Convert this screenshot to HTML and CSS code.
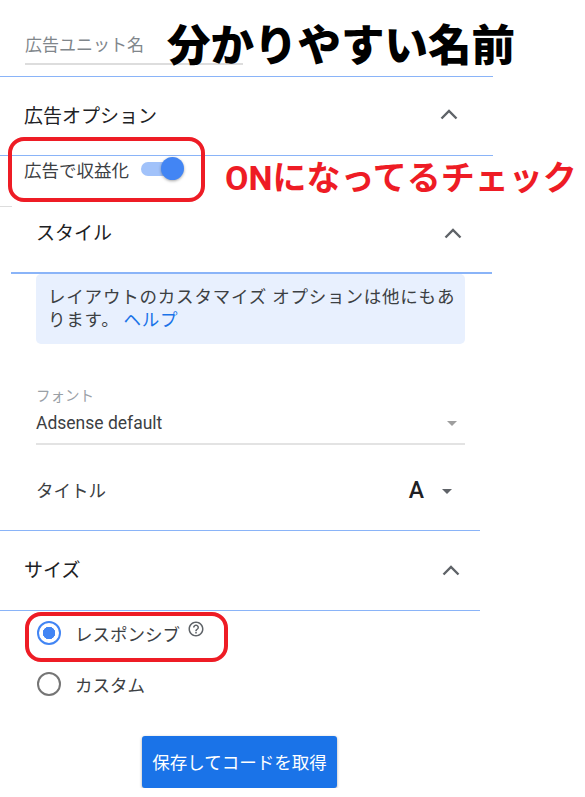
FILE: index.html
```html
<!doctype html>
<html lang="ja">
<head>
<meta charset="utf-8">
<title>広告ユニット</title>
<link rel="stylesheet" href="styles.css">
</head>
<body>

	<div class="page">

		<div class="name-row">
			<div class="name-field"><span class="name-label">広告ユニット名</span></div>
		</div>

		<div class="acc-head acc-main">
			<span>広告オプション</span>
			<svg class="chevron" width="18" height="11" viewBox="0 0 18 11"><polyline points="1.5,9.5 9,2 16.5,9.5" /></svg>
		</div>

		<div class="toggle-row">
			<span>広告で収益化</span>
			<span class="switch"><span class="switch-track"></span><span class="switch-thumb"></span></span>
		</div>

		<div class="stub"></div>

		<div class="style-panel">

			<div class="acc-head acc-style">
				<span>スタイル</span>
				<svg class="chevron" width="18" height="11" viewBox="0 0 18 11"><polyline points="1.5,9.5 9,2 16.5,9.5" /></svg>
			</div>

			<div class="info">
				<div>レイアウトのカスタマイズ オプションは他にもあ</div>
				<div>ります。<a href="#">ヘルプ</a></div>
			</div>

			<div class="select-field">
				<div class="select-label">フォント</div>
				<div class="select-value"><span>Adsense default</span><span class="caret"></span></div>
			</div>

			<div class="title-row">
				<span>タイトル</span>
				<span class="title-ctl"><span class="title-a">A</span><span class="caret caret-dark"></span></span>
			</div>

		</div>

		<div class="size-section">

			<div class="acc-head acc-size">
				<span>サイズ</span>
				<svg class="chevron" width="18" height="11" viewBox="0 0 18 11"><polyline points="1.5,9.5 9,2 16.5,9.5" /></svg>
			</div>

			<div class="radio-list">
				<label class="radio-row">
					<span class="radio radio-on"></span>
					<span>レスポンシブ</span>
					<svg class="help" width="18" height="18" viewBox="0 0 24 24"><path d="M11 18h2v-2h-2v2zm1-16C6.48 2 2 6.48 2 12s4.48 10 10 10 10-4.48 10-10S17.52 2 12 2zm0 18c-4.41 0-8-3.59-8-8s3.59-8 8-8 8 3.59 8 8-3.59 8-8 8zm0-14c-2.21 0-4 1.79-4 4h2c0-1.1.9-2 2-2s2 .9 2 2c0 2-3 1.75-3 5h2c0-2.25 3-2.5 3-5 0-2.21-1.79-4-4-4z" /></svg>
				</label>
				<label class="radio-row">
					<span class="radio"></span>
					<span>カスタム</span>
				</label>
			</div>

			<button class="btn-save">保存してコードを取得</button>

		</div>

		<!-- annotations drawn over the screenshot -->
		<div class="note-big">分かりやすい名前</div>
		<div class="note-box note-box-toggle"></div>
		<div class="note-red">ONになってるチェック</div>
		<div class="note-box note-box-radio"></div>

	</div>

</body>
</html>
```

FILE: styles.css
```css
	html { --line-blue: #8ab4f8; --text: #3c4043; --grey: #5f6368; --red: #ee1c25; }

	body { margin: 0; background: #fff; color: var( --text ); font: 17.5px Roboto, "Noto Sans CJK JP", sans-serif; }

	.page { position: relative; width: 493px; }

	/* ad unit name */
	.name-row { height: 76px; border-bottom: 1px solid var( --line-blue ); }
	.name-field { box-sizing: border-box; display: flex; align-items: flex-end; height: 65px; width: 218px; margin-left: 25px;
		padding-bottom: 8px; border-bottom: 2px solid #ddd; }
	.name-label { color: #80868b; font-size: 17px; line-height: 20px; }

	/* accordion headers */
	.acc-head { box-sizing: border-box; display: flex; align-items: center; justify-content: space-between; color: #202124; font-size: 19px; }
	.acc-main { height: 79px; padding: 0 35px 4px 24px; border-bottom: 1px solid var( --line-blue ); }
	.acc-style { height: 67px; padding: 0 30px 17px 25px; border-bottom: 2px solid var( --line-blue ); }
	.acc-size { height: 80px; padding: 0 20px 4px 24px; border-bottom: 1px solid var( --line-blue ); }
	.chevron polyline { fill: none; stroke: var( --grey ); stroke-width: 2.4; }
	.acc-style .chevron, .acc-size .chevron { margin-top: 4px; }

	/* toggle */
	.toggle-row { box-sizing: border-box; display: flex; align-items: center; gap: 12px; height: 50px; padding: 0 0 24px 24px; font-size: 17.5px; }
	.switch { position: relative; display: block; width: 43px; height: 22px; }
	.switch-track { position: absolute; left: 0; top: 4px; width: 36px; height: 14px; border-radius: 7px; background: #a1c2fa; }
	.switch-thumb { position: absolute; left: 20px; top: -1px; width: 23px; height: 23px; border-radius: 50%; background: #4285f4;
		box-shadow: 0 1px 3px rgba( 0, 0, 0, .35 ); }

	.stub { width: 12px; height: 1px; background: #ddd; }

	/* style panel */
	.style-panel { width: 481px; margin-left: 11px; }

	.info { box-sizing: border-box; width: 429px; height: 70px; margin-left: 25px; padding: 12px 8px 0 12px; background: #e8f0fe;
		border-radius: 5px; line-height: 23px; letter-spacing: .8px; white-space: nowrap; }
	.info a { color: #1a73e8; text-decoration: none; margin-left: 4px; }

	.select-field { box-sizing: border-box; width: 429px; margin: 43px 0 0 25px; padding-bottom: 8px; border-bottom: 2px solid #e3e3e3; }
	.select-label { color: #9aa0a6; font-size: 14.5px; line-height: 20px; margin-bottom: 4px; }
	.select-value { display: flex; align-items: center; justify-content: space-between; padding-right: 8px; line-height: 24px; }

	.caret { width: 0; height: 0; border-left: 5px solid transparent; border-right: 5px solid transparent; border-top: 5px solid #9e9e9e; }
	.caret-dark { border-left-width: 5.5px; border-right-width: 5.5px; border-top-color: var( --grey ); }

	.title-row { box-sizing: border-box; display: flex; align-items: center; justify-content: space-between; height: 85px;
		padding: 27px 40px 20px 25px; line-height: 38px; }
	.title-ctl { display: flex; align-items: center; gap: 18px; }
	.title-a { color: #202124; font-size: 23px; font-weight: 500; }

	/* size */
	.size-section { width: 480px; border-top: 1px solid var( --line-blue ); }

	.radio-list { display: flex; flex-direction: column; gap: 3px; margin-top: -2px; padding-left: 37px; }
	.radio-row { display: flex; align-items: center; gap: 14px; height: 48px; }
	.radio { box-sizing: border-box; width: 24px; height: 24px; border: 2px solid #757575; border-radius: 50%; }
	.radio-on { border: 2.5px solid #4285f4; background: radial-gradient( circle, #4285f4 0 6px, #fff 6.5px ); }
	.help { fill: var( --grey ); margin: 0 0 9px -7px; }

	.btn-save { display: block; width: 195px; height: 52px; margin: 28px 0 0 142px; padding-bottom: 3px; border: 0; border-radius: 3px;
		background: #1a73e8; color: #fff; font: 17.5px Roboto, "Noto Sans CJK JP", sans-serif; box-shadow: 0 1px 3px rgba( 0, 0, 0, .35 );
		cursor: pointer; }

	/* annotations */
	.note-big { position: absolute; left: 167px; top: 21px; color: #000; font-size: 43.5px; font-weight: 900; line-height: 52px; white-space: nowrap; }
	.note-red { position: absolute; left: 225px; top: 155px; color: var( --red ); font-size: 34px; font-weight: 700; line-height: 46px; white-space: nowrap; }
	.note-box { position: absolute; border: 4px solid var( --red ); border-radius: 16px; box-sizing: border-box; }
	.note-box-toggle { left: 8px; top: 137px; width: 197px; height: 65px; }
	.note-box-radio { left: 25px; top: 612px; width: 203px; height: 50px; }
```
